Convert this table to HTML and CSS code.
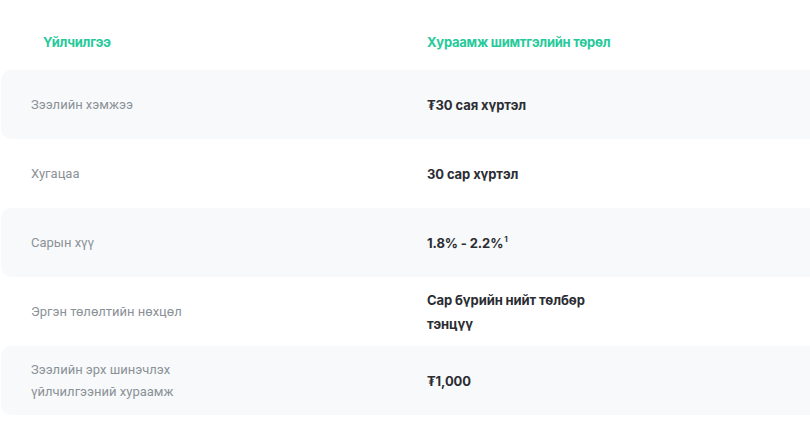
FILE: index.html
```html
<!DOCTYPE html>
<html lang="mn">
<head>
<meta charset="utf-8">
<link rel="stylesheet" href="styles.css">
</head>
<body>
<div class="table">
  <div class="head">
    <div class="h1">Үйлчилгээ</div>
    <div class="h2">Хураамж шимтгэлийн төрөл</div>
  </div>
  <div class="row shade">
    <div class="label">Зээлийн хэмжээ</div>
    <div class="value">₮30 сая хүртэл</div>
  </div>
  <div class="row">
    <div class="label">Хугацаа</div>
    <div class="value">30 сар хүртэл</div>
  </div>
  <div class="row shade">
    <div class="label">Сарын хүү</div>
    <div class="value">1.8% - 2.2%<sup>1</sup></div>
  </div>
  <div class="row">
    <div class="label">Эргэн төлөлтийн нөхцөл</div>
    <div class="value wrap">Сар бүрийн нийт төлбөр тэнцүү</div>
  </div>
  <div class="row shade">
    <div class="label wrap">Зээлийн эрх шинэчлэх үйлчилгээний хураамж</div>
    <div class="value">₮1,000</div>
  </div>
</div>
</body>
</html>
```

FILE: styles.css
```css
html, body {
  margin: 0;
  padding: 0;
  background: #ffffff;
  overflow: hidden;
}
.table {
  display: flex;
  flex-direction: column;
  padding-left: 1px;
}
.head {
  display: grid;
  grid-template-columns: 426px 1fr;
  height: 70px;
  box-sizing: border-box;
  padding-top: 14px;
  align-items: center;
  font-family: "Inter", "Roboto", sans-serif;
  font-weight: 700;
  font-size: 13px;
  letter-spacing: -0.25px;
  color: #26c99a;
}
.h1 {
  padding-left: 42px;
}
.row {
  display: grid;
  grid-template-columns: 426px 1fr;
  height: 69px;
  align-items: center;
  border-radius: 10px 0 0 10px;
}
.shade {
  background: #f7f9fa;
}
.label {
  padding-left: 30px;
  font-family: "Roboto", "Liberation Sans", sans-serif;
  font-size: 13px;
  color: #8b9197;
  line-height: 22px;
}
.label.wrap {
  max-width: 150px;
}
.value {
  font-family: "Inter", "Roboto", sans-serif;
  font-weight: 700;
  font-size: 13px;
  letter-spacing: -0.1px;
  color: #2b2d33;
  line-height: 24px;
}
.value.wrap {
  max-width: 180px;
}
sup {
  font-size: 8px;
  line-height: 0;
  margin-left: 1px;
  vertical-align: 6px;
}
```
